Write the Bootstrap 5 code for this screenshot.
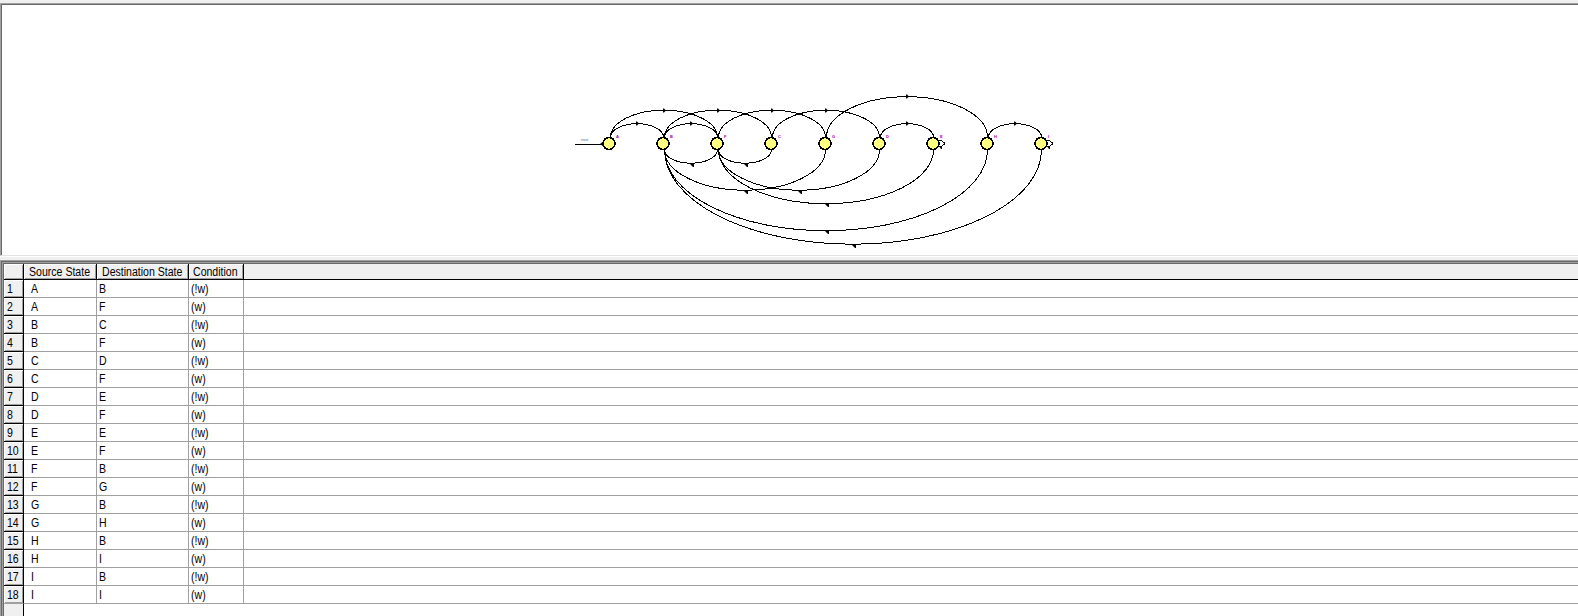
<!DOCTYPE html>
<html lang="en">
<head>
<meta charset="utf-8">
<title>State Machine Viewer</title>
<link href="https://cdn.jsdelivr.net/npm/bootstrap@5.3.0/dist/css/bootstrap.min.css" rel="stylesheet">
<style>
html, body { height: 100%; }
body { background: #f0f0f0; color: #000; font-family: "Liberation Sans", sans-serif; font-size: 12px; line-height: 14px; }
.viewer { height: 253px; margin-top: 3px; background: #fff; border-left: 1px solid #a0a0a0; border-top: 1px solid #a0a0a0; border-bottom: 1px solid #e3e3e3; }
.viewer-inner { border-left: 1px solid #696969; border-top: 1px solid #696969; }
.viewer svg { display: block; margin: -2px 0 0 -2px; overflow: visible; }
.splitter { height: 4px; border-top: 1px solid #fff; }
.sheet { border-left: 1px solid #a0a0a0; border-top: 1px solid #a0a0a0; background: #fff; }
.sheet-mid { border-left: 1px solid #696969; border-top: 1px solid #696969; }
.sheet-in { border-left: 1px solid #a0a0a0; border-top: 1px solid #a0a0a0; }
.sheet-core { border-left: 1px solid #696969; border-top: 1px solid #696969; }
.transitions { table-layout: fixed; width: 100%; border-collapse: separate; border-spacing: 0; }
.transitions th, .transitions td { height: 18px; padding: 0; font-weight: 400; border: solid #a0a0a0; border-width: 0 1px 1px 0; white-space: nowrap; vertical-align: top; overflow: hidden; }
.transitions thead th { height: 16px; background: #f0f0f0; border-color: #000; box-shadow: inset 1px 1px #fff, inset -1px -1px #a0a0a0; padding: 1px 0 0 5px; }
.transitions thead th:nth-child(4) { padding-left: 4px; }
.transitions thead th:last-child { box-shadow: none; border-right: 0; }
.transitions tbody th { background: #f0f0f0; border-color: #000; box-shadow: inset 1px 1px #fff, inset -1px -1px #a0a0a0; padding: 2px 0 0 3px; }
.transitions tbody td { padding: 2px 0 0 2px; }
.transitions tbody td:nth-child(2) { padding-left: 7px; }
.transitions tbody td:last-child { border-right: 0; }
.transitions tbody tr:last-child th { border-bottom-color: #a0a0a0; }
.transitions span { display: block; transform: scaleX(.88); transform-origin: left; }
.transitions tbody td span { margin-left: -.5px; }
.gutter { width: 20px; background: #f0f0f0; border-right: 1px solid #000; }
.tag-text { font: bold 4px "Liberation Sans", sans-serif; fill: #a000a0; }
</style>
</head>
<body class="d-flex flex-column overflow-hidden">
<section class="viewer flex-shrink-0 d-flex flex-column overflow-hidden">
  <div class="viewer-inner flex-grow-1">
    <svg id="diagram" width="1578" height="250" viewBox="0 3 1578 250"></svg>
  </div>
</section>
<div class="splitter flex-shrink-0"></div>
<section class="sheet flex-grow-1 d-flex overflow-hidden">
  <div class="sheet-mid flex-grow-1 d-flex"><div class="sheet-in flex-grow-1 d-flex"><div class="sheet-core flex-grow-1 d-flex flex-column">
    <table class="transitions flex-shrink-0">
      <colgroup><col style="width:20px"><col style="width:73px"><col style="width:92px"><col style="width:55px"><col></colgroup>
      <thead><tr><th></th><th><span>Source State</span></th><th><span>Destination State</span></th><th><span>Condition</span></th><th></th></tr></thead>
      <tbody id="rows"></tbody>
    </table>
    <div class="gutter flex-grow-1"></div>
  </div></div></div>
</section>
<script src="https://cdn.jsdelivr.net/npm/bootstrap@5.3.0/dist/js/bootstrap.bundle.min.js"></script>
<script>
const edges = ["AB","AF","BC","BF","CD","CF","DE","DF","EE","EF","FB","FG","GB","GH","HB","HI","IB","II"];
document.getElementById("rows").innerHTML = edges.map((e, i) =>
  `<tr><th><span>${i + 1}</span></th><td><span>${e[0]}</span></td><td><span>${e[1]}</span></td><td><span>${i % 2 ? "(w)" : "(!w)"}</span></td><td></td></tr>`).join("");

const order = "ABFCGDEHI", X = c => 609 + 54 * order.indexOf(c), Y = 143.5;
let s = '<g fill="none" stroke="#000" shape-rendering="crispEdges">';
let arrows = "";
for (const e of edges) {
  const a = X(e[0]), b = X(e[1]);
  if (a === b) {
    s += `<path d="M${a + 6} 140.5h2l3 2v2l-3 2h-3"/>`;
    arrows += `<path d="M${a + 6} 146h3v3h-1z"/>`;
    continue;
  }
  const fwd = b > a, l = Math.min(a, b) + 1.5, r = Math.max(a, b) + .5, ry = Math.abs(b - a) / 4;
  const y = fwd ? 137.2 : 149.7, top = fwd ? y - ry : y + ry, m = (a + b) / 2;
  s += `<path d="M${l} ${y}A${(r - l) / 2} ${ry} 0 0 ${fwd ? 1 : 0} ${r} ${y}"/>`;
  arrows += fwd ? `<path d="M${m} ${Math.floor(top) - 1.5}h1l2 2l-2 2h-1z"/>`
                : `<path d="M${m + 4} ${Math.floor(top)}v4h-1l-3-3z"/>`;
}
s += '<path d="M575 144.5H603"/></g><g fill="#000">' + arrows + '<path d="M600 144l4-3v6z"/></g>';
for (const c of order)
  s += `<circle cx="${X(c)}" cy="${Y}" r="6" fill="#ffff80" stroke="#000" stroke-width="1.6" shape-rendering="crispEdges"/><text class="tag-text" x="${X(c) + 7}" y="138">${c}</text>`;
s += '<text x="581" y="141" class="tag-text" style="fill:#6a8caf;font-size:3px">reset</text>';
document.getElementById("diagram").innerHTML = s;
</script>
</body>
</html>
